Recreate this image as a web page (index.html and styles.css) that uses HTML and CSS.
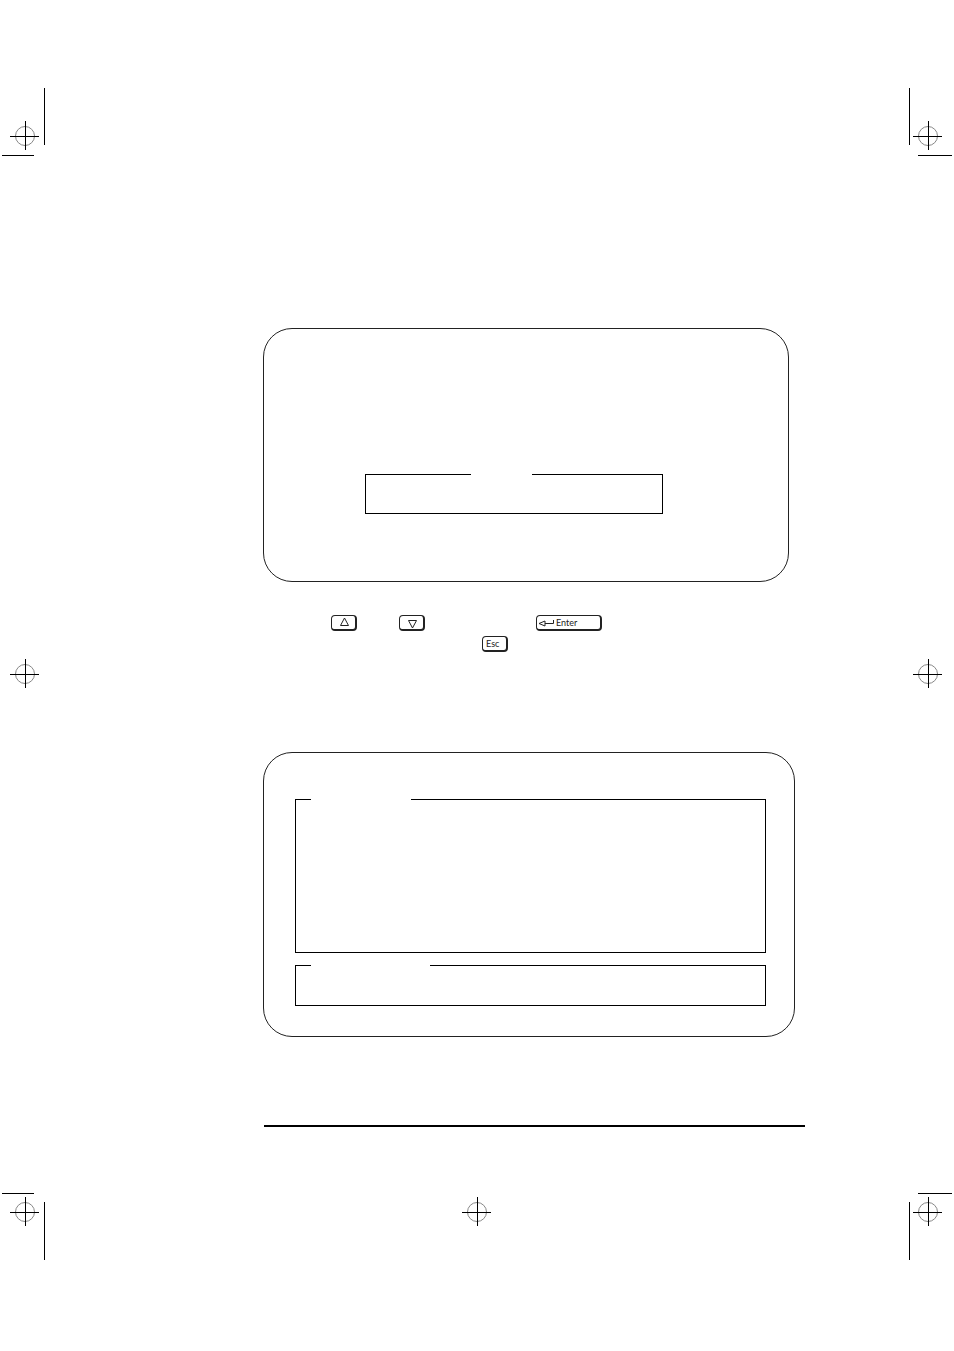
FILE: index.html
```
<!DOCTYPE html>
<html lang="en">
<head>
    <meta charset="UTF-8">
    <title>Setup screens</title>

    <link rel="stylesheet" href="styles.css">
</head>
<body>
    <div class="sheet">
        <div class="marks">
            <svg width="46" height="68">
                <defs>
                    <!-- registration mark -->
                    <symbol id="target" viewBox="0 0 29 29">
                        <circle class="ring" cx="15" cy="15" r="9.5"/>
                        <rect x="15" y="0" width="1" height="29"/>
                        <rect x="0" y="15" width="29" height="1"/>
                    </symbol>
                </defs>
                <rect x="44" y="0" width="1" height="57"/>
                <use href="#target" x="10" y="33" width="29" height="29"/>
                <rect x="2" y="67" width="32" height="1"/>
            </svg>
            <svg width="46" height="29">
                <use href="#target" x="10" y="0" width="29" height="29"/>
            </svg>
            <svg width="46" height="69">
                <rect x="2" y="2" width="32" height="1"/>
                <use href="#target" x="10" y="6" width="29" height="29"/>
                <rect x="44" y="11" width="1" height="58"/>
            </svg>
        </div>

        <main class="page">
            <section class="screen screen-prompt">
                <fieldset class="panel">
                    <legend class="gap-small"></legend>
                </fieldset>
            </section>

            <div class="keys">
                <div class="key-row">
                    <kbd class="key">
                        <svg width="10" height="13"><path d="M5.5 2 L9.5 9.5 H1.5 Z"/></svg>
                    </kbd>
                    <kbd class="key key-down">
                        <svg width="10" height="13"><path d="M5.5 12 L9.5 4.5 H1.5 Z"/></svg>
                    </kbd>
                    <kbd class="key key-enter">
                        <svg width="16" height="9"><path d="M1 5.5 L7 3 V8 Z M7 5.5 H15.5 V2"/></svg>
                        Enter
                    </kbd>
                </div>
                <div class="key-row">
                    <kbd class="key key-esc">Esc</kbd>
                </div>
            </div>

            <section class="screen screen-list">
                <fieldset class="panel panel-tall">
                    <legend class="gap-medium"></legend>
                </fieldset>
                <fieldset class="panel panel-short">
                    <legend class="gap-large"></legend>
                </fieldset>
            </section>

            <hr class="rule">

            <svg class="center-mark" width="29" height="29">
                <use href="#target" width="29" height="29"/>
            </svg>
        </main>

        <div class="marks">
            <svg width="47" height="68">
                <rect x="2" y="0" width="1" height="57"/>
                <use href="#target" x="6" y="33" width="29" height="29"/>
                <rect x="11" y="67" width="34" height="1"/>
            </svg>
            <svg width="47" height="29">
                <use href="#target" x="6" y="0" width="29" height="29"/>
            </svg>
            <svg width="47" height="69">
                <rect x="11" y="2" width="34" height="1"/>
                <use href="#target" x="6" y="6" width="29" height="29"/>
                <rect x="2" y="11" width="1" height="58"/>
            </svg>
        </div>
    </div>
</body>
</html>
```

FILE: styles.css
```
* {
    box-sizing: border-box;
}
body {
    margin: 0;
    background-color: #fff;
    color: #000;
    font-family: Lato, "Liberation Sans", sans-serif;
}
svg {
    display: block;
    flex: none;
}
.sheet {
    display: grid;
    grid-template-columns: 46px 1fr 47px;
    min-height: 100vh;
    padding: 88px 0 91px;
}

/* trim marks down both edges */
.marks {
    display: flex;
    flex-direction: column;
    justify-content: space-between;
}
.ring {
    fill: none;
    stroke: #888;
}

.page {
    padding: 240px 0 34px;
}
.screen {
    margin-left: 217px;
    border: 1px solid #222;
    border-radius: 29px;
}
.screen-prompt {
    margin-right: 118px;
    padding: 145px 125px 67px 101px;
}
.screen-list {
    margin-right: 112px;
    padding: 46px 28px 30px 31px;
}
.panel {
    min-width: 0;
    min-height: 40px;
    margin: 0;
    padding: 0;
    border: 1px solid #000;
}
.panel-tall {
    min-height: 154px;
    margin-bottom: 12px;
}
.panel-short {
    min-height: 41px;
}

/* breaks in the top line of a panel */
legend {
    height: 1px;
    padding: 0;
}
.gap-small {
    width: 61px;
    margin-left: 105px;
}
.gap-medium {
    width: 100px;
    margin-left: 15px;
}
.gap-large {
    width: 119px;
    margin-left: 15px;
}

.keys {
    margin: 33px 0 100px 217px;
}
.key-row {
    display: flex;
    margin-bottom: 5px;
    padding-left: 68px;
}
.key {
    display: flex;
    align-items: center;
    width: 26px;
    height: 16px;
    padding-left: 7px;
    border: 1px solid #222;
    border-width: 1px 2px 2px 1px;
    border-radius: 4px;
    color: #222;
    font-family: inherit;
    font-size: 9px;
    line-height: 12px;
}
.key path {
    fill: none;
    stroke: #222;
}
.key-down {
    margin-left: 42px;
}
.key-enter {
    gap: 2px;
    width: 66px;
    margin-left: 111px;
    padding-left: 1px;
}
.key-esc {
    margin-left: 151px;
    padding-left: 3px;
}

.rule {
    height: 2px;
    margin: 88px 102px 70px 218px;
    border: 0;
    background-color: #000;
}
.center-mark {
    margin: 0 auto;
}
```
